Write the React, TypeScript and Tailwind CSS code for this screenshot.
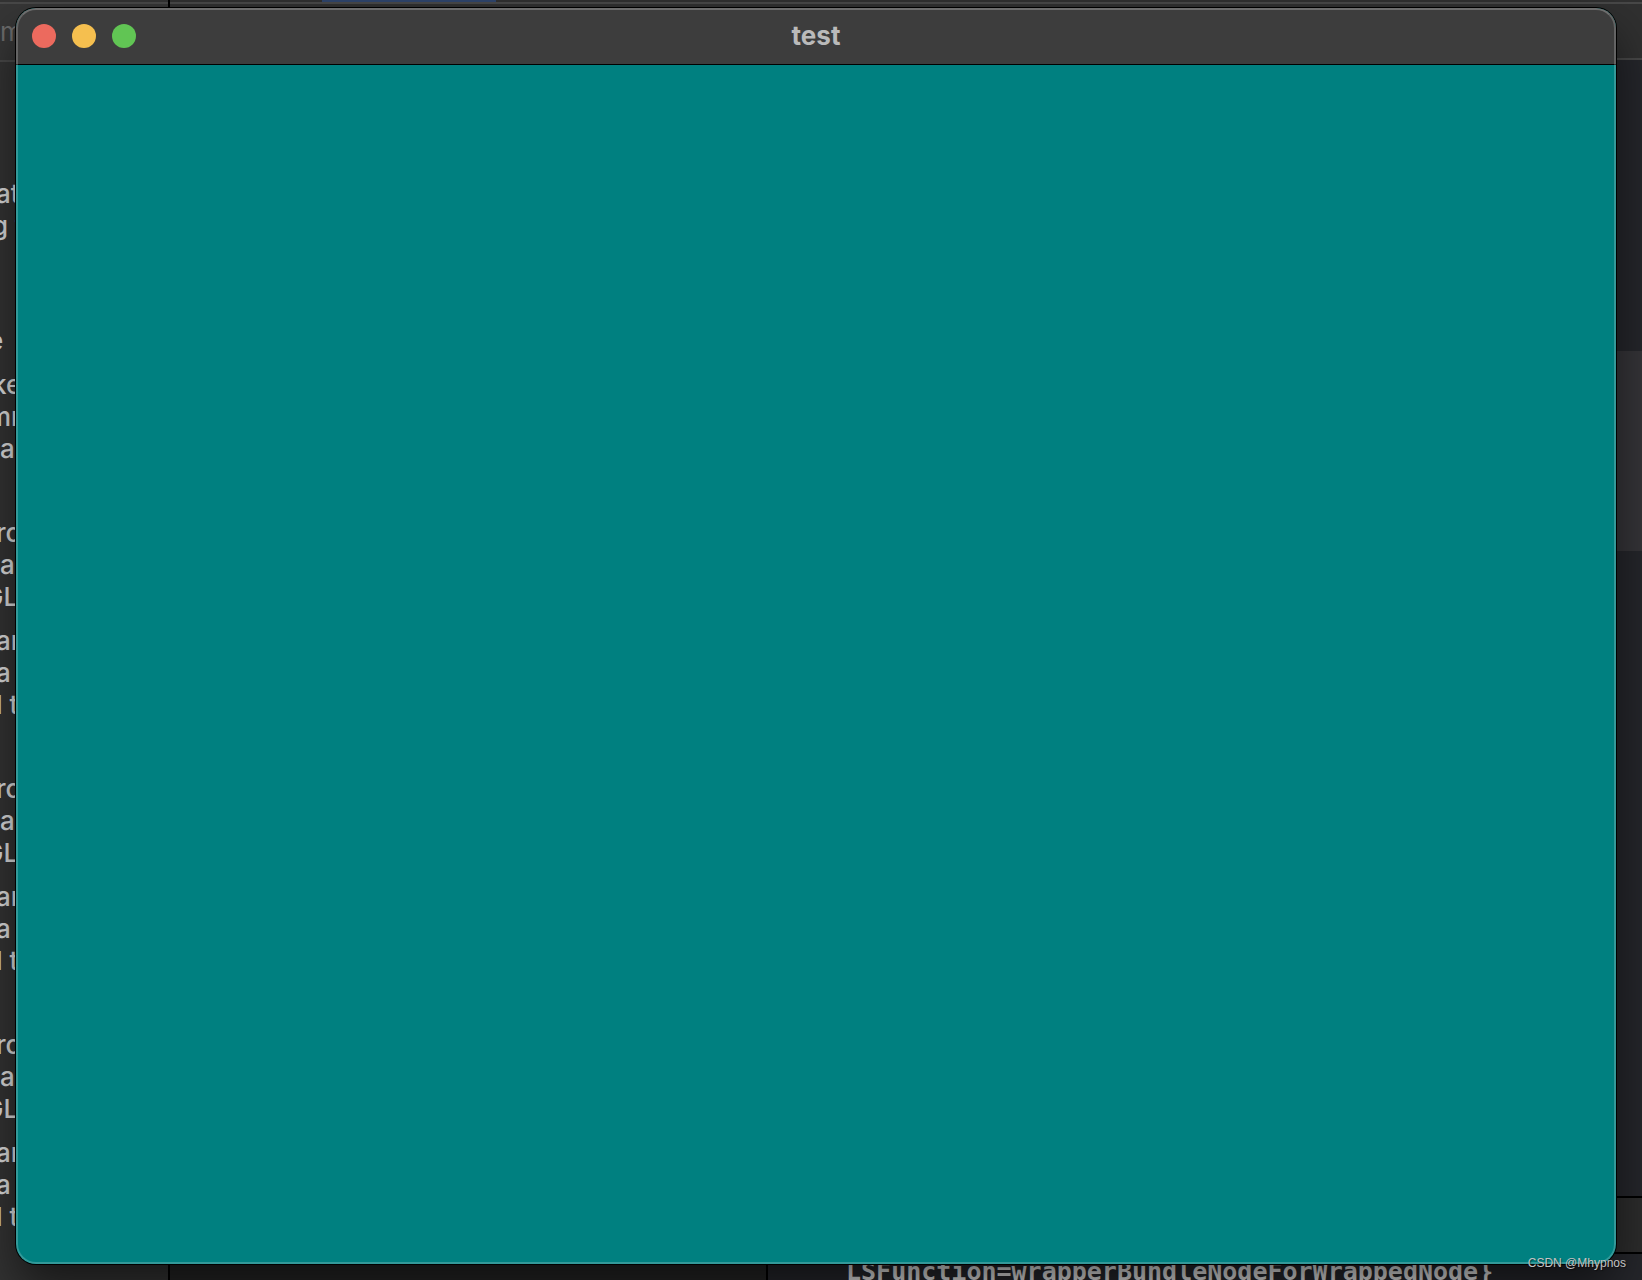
const sidebarGroups: { gap: string; lines: [string, string][] }[] = [
  { gap: "mt-0", lines: [["at", "-ml-1"], ["g t", "-ml-2"]] },
  { gap: "mt-[83px]", lines: [["e", "-ml-3"]] },
  { gap: "mt-3", lines: [["ke", "-ml-2"], ["mm", "-ml-3"], ["a", "-ml-0"]] },
  ...[0, 1, 2].flatMap(() => [
    { gap: "mt-[52px]", lines: [["ro", "-ml-1"], ["a", "-ml-0"], ["GL", "-ml-4"]] as [string, string][] },
    { gap: "mt-3", lines: [["an", "-ml-1"], ["a", "-ml-1"], ["l t", "-ml-1"]] as [string, string][] },
  ]),
];

const trafficLights = [
  { label: "Close", color: "bg-[#ec6a5e]" },
  { label: "Minimize", color: "bg-[#f5bf4f]" },
  { label: "Zoom", color: "bg-[#61c554]" },
];

function Sidebar() {
  return (
    <aside className="w-[170px] shrink-0 overflow-hidden border-r-2 border-black bg-[#333333]">
      <div className="mt-0.5 flex h-15 items-center border-y-2 border-[#484848] bg-[#363636] text-[26px] leading-8 text-[#6c6c6c]">
        <span>m</span>
      </div>
      <div className="w-5 overflow-hidden pt-[116px] text-[26px] leading-8 font-medium text-[#dcdcdc]">
        {sidebarGroups.map((group, i) => (
          <div key={i} className={group.gap}>
            {group.lines.map(([text, shift], j) => (
              <p key={j} className={`${shift} h-8 whitespace-pre`}>{text}</p>
            ))}
          </div>
        ))}
      </div>
    </aside>
  );
}

function Editor() {
  return (
    <main className="flex min-w-0 flex-1 flex-col">
      <header className="flex h-15 shrink-0 flex-col border-b-2 border-[#484848] bg-[#303030]">
        <div className="ml-[152px] h-0.5 w-[174px] bg-[#2f456c]" />
        <div className="h-0.5 bg-[#484848]" />
      </header>
      <section className="flex-1 bg-[#25262b] pt-[291px]">
        <div className="h-[200px] bg-[#353438]" />
      </section>
      <div className="h-[58px] shrink-0 border-y-2 border-black bg-[#2c2c2c]" />
      <footer className="flex h-[26px] shrink-0 overflow-hidden bg-[#25262b]">
        <div className="w-[598px] shrink-0 border-r-2 border-black bg-[#242424]" />
        <p className="pl-[78px] font-['DejaVu_Sans_Mono','Liberation_Mono',monospace] text-[25px] leading-9 font-bold whitespace-pre text-[#dedede]">
          LSFunction=wrapperBundleNodeForWrappedNode{"}"}
        </p>
      </footer>
    </main>
  );
}

function TestWindow() {
  return (
    <div className="absolute top-2 right-[26px] bottom-4 left-4 flex flex-col overflow-hidden rounded-[20px] bg-[#008080] shadow-[0_0_0_1px_#000000,0_24px_48px_rgba(0,0,0,0.55)]">
      <div className="grid h-[57px] shrink-0 grid-cols-[1fr_auto_1fr] items-center border-b border-black bg-[#3d3d3d] px-4">
        <div className="flex gap-4">
          {trafficLights.map((light) => (
            <button key={light.label} type="button" aria-label={light.label} className={`size-6 rounded-full ${light.color}`} />
          ))}
        </div>
        <h1 className="text-[26px] leading-8 font-bold text-[#bababa]">test</h1>
      </div>
      <div className="pointer-events-none absolute inset-0 rounded-[20px] border-2 border-white/20 border-t-white/25" />
    </div>
  );
}

export default function App() {
  return (
    <div className="relative flex h-screen overflow-hidden bg-[#25262b] font-['Inter','Liberation_Sans',sans-serif] antialiased">
      <Sidebar />
      <Editor />
      <TestWindow />
      <div className="absolute right-4 bottom-[9px] font-['Liberation_Sans',sans-serif] text-[12px] leading-4 text-[#c4c4c4] [text-shadow:1px_1px_1px_rgba(0,0,0,0.5)]">
        CSDN @Mhypnos
      </div>
    </div>
  );
}
